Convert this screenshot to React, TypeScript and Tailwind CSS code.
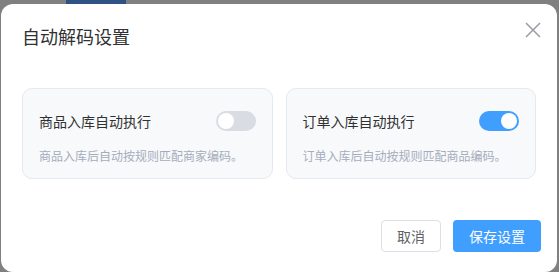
export default function App() {
  return (
    <div
      className="flex h-[272px] w-[559px] flex-col overflow-hidden bg-[#808080]"
      style={{ fontFamily: '"Noto Sans CJK SC", "Noto Sans", sans-serif' }}
    >
      <div className="flex h-[4px] shrink-0">
        <div className="ml-[66px] h-full w-[60px] bg-[#2d5283]" />
      </div>
      <Dialog />
    </div>
  );
}

function Dialog() {
  return (
    <div className="ml-[1px] flex h-[268px] w-[556px] flex-col rounded-[12px] bg-white px-[21px] pt-[20px]">
      <div className="flex items-start justify-between">
        <h2 className="text-[18px] leading-[25px] text-[#303133]">自动解码设置</h2>
        <svg className="-mr-[6px] mt-[-3px]" width="18" height="18" viewBox="0 0 18 18" fill="none">
          <path d="M2 2 L16 16 M16 2 L2 16" stroke="#999ca3" strokeWidth="1.5" />
        </svg>
      </div>
      <div className="mt-[39px] flex gap-[13px]">
        <SettingCard title="商品入库自动执行" desc="商品入库后自动按规则匹配商家编码。" on={false} />
        <SettingCard title="订单入库自动执行" desc="订单入库后自动按规则匹配商品编码。" on />
      </div>
      <div className="-mr-[5px] mt-[41px] flex justify-end gap-[12px]">
        <button className="h-[32px] w-[60px] rounded-[4px] border border-[#dcdfe6] bg-white text-[14px] text-[#606266]">
          取消
        </button>
        <button className="h-[32px] w-[88px] rounded-[4px] bg-[#409eff] text-[14px] text-white">保存设置</button>
      </div>
    </div>
  );
}

function SettingCard({ title, desc, on }: { title: string; desc: string; on: boolean }) {
  return (
    <div className="flex h-[91px] w-[253px] flex-col rounded-[10px] border border-[#e4e8ef] bg-[#f8f9fb] px-[16px] pt-[22px]">
      <div className="flex h-[20px] items-center justify-between">
        <span className="text-[14px] leading-[20px] text-[#303133]">{title}</span>
        <Toggle on={on} />
      </div>
      <p className="mt-[15px] text-[12px] leading-[20px] text-[#a5adbb]">{desc}</p>
    </div>
  );
}

function Toggle({ on }: { on: boolean }) {
  return (
    <div
      className={
        on
          ? 'flex h-[20px] w-[40px] items-center justify-end rounded-full bg-[#409eff] px-[2px]'
          : 'flex h-[20px] w-[40px] items-center justify-start rounded-full bg-[#d9dce3] px-[2px]'
      }
    >
      <div className="h-[16px] w-[16px] rounded-full bg-white" />
    </div>
  );
}
